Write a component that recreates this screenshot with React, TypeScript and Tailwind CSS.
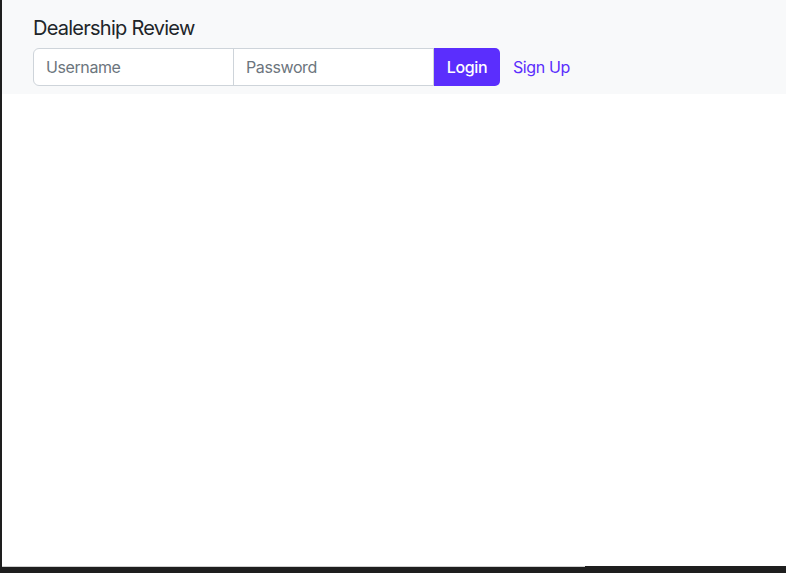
import React from "react";

export default function App() {
  return (
    <div
      className="w-[786px] h-[573px] bg-[#1e1e1e] flex flex-col overflow-hidden"
      style={{ fontFamily: "Inter, 'Noto Sans', 'Liberation Sans', sans-serif" }}
    >
      <div className="ml-[2px] h-[566px] bg-white flex flex-col">
        <nav className="bg-[#f8f9fa] h-[94px] pl-[31px] pt-[8px] flex flex-col">
          <div className="h-[40px] flex items-center text-[20px] tracking-[-0.75px] text-[#212529] leading-[30px]">
            Dealership Review
          </div>
          <div className="flex items-center h-[38px] tracking-[-0.4px]">
            <input
              placeholder="Username"
              className="w-[201px] h-[38px] border border-[#ced4da] rounded-l-[6px] bg-white px-[12px] text-[16px] text-[#212529] placeholder:text-[#6c757d] outline-none"
            />
            <input
              placeholder="Password"
              type="password"
              className="w-[201px] h-[38px] border border-[#ced4da] -ml-px bg-white px-[12px] text-[16px] text-[#212529] placeholder:text-[#6c757d] outline-none"
            />
            <button className="h-[38px] w-[66px] bg-[#5b2efd] text-white text-[16px] font-medium rounded-r-[5px]">
              Login
            </button>
            <a className="ml-[13px] text-[16px] text-[#5b2efd] cursor-pointer">Sign Up</a>
          </div>
        </nav>
      </div>
      <div className="ml-[2px] w-[583px] h-px bg-[#cfcfcf]"></div>
    </div>
  );
}
